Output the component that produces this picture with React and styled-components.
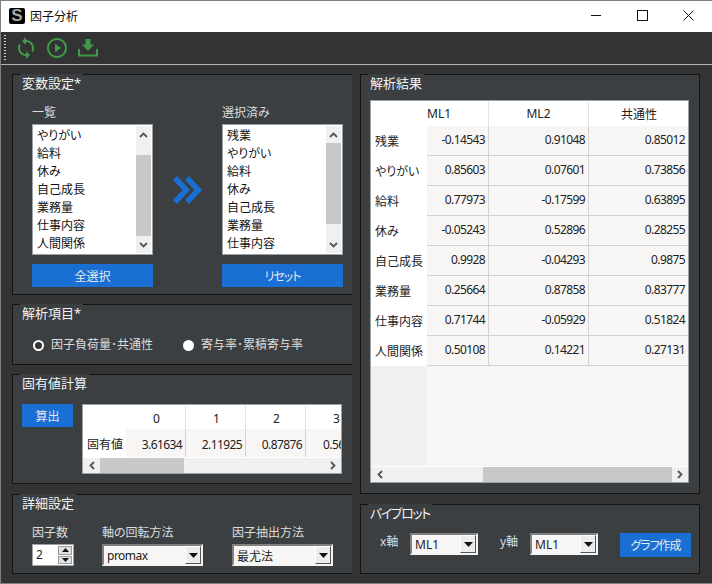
import React from 'react';
import styled, { createGlobalStyle } from 'styled-components';
import { MdSync, MdPlayCircleOutline } from 'react-icons/md';

const GlobalStyle = createGlobalStyle`
  html, body {
    margin: 0;
    padding: 0;
    overflow: hidden;
  }
  body {
    font-family: "Noto Sans", "Noto Sans CJK JP", sans-serif;
    font-size: 12px;
    font-feature-settings: "palt" 1;
  }
  * {
    box-sizing: border-box;
  }
`;

const Window = styled.div`
  width: 712px;
  height: 584px;
  display: flex;
  flex-direction: column;
  background-color: #333333;
  border-top: 1px solid #7f7f7f;
  border-left: 1px solid #7f7f7f;
  border-bottom: 1px solid #7f7f7f;
`;

const TitleBar = styled.div`
  height: 31px;
  flex-shrink: 0;
  display: flex;
  align-items: center;
  background-color: white;
  padding: 0 1px 2px 8px;
  color: #111;
  font-size: 12px;
`;

const Logo = styled.div`
  width: 16px;
  height: 16px;
  border-radius: 2px;
  background-color: #000;
  color: #a8a8a8;
  font-family: "Liberation Sans", sans-serif;
  font-weight: bold;
  font-size: 17px;
  line-height: 16px;
  text-align: center;
  margin-right: 5px;
`;

const TitleText = styled.div`
  flex: 1;
`;

const WindowButton = styled.div`
  width: 46px;
  height: 28px;
  display: flex;
  align-items: center;
  justify-content: center;
`;

const Toolbar = styled.div`
  height: 33px;
  flex-shrink: 0;
  display: flex;
  align-items: center;
  gap: 7px;
  padding-left: 3px;
  border-bottom: 1px solid #b4b4b4;
  background-color: #333333;
  color: #3f9a4c;
`;

const Grip = styled.div`
  width: 2px;
  height: 26px;
  margin-right: 1px;
  background-image: linear-gradient(#d0d0d0 50%, transparent 50%);
  background-size: 2px 3px;
`;

const ToolIcon = styled.div`
  width: 24px;
  height: 24px;
  display: flex;
  align-items: center;
  justify-content: center;
`;

const Content = styled.div`
  flex: 1;
  display: flex;
  gap: 8px;
  padding: 9px 0 0 11px;
`;

const Column = styled.div`
  width: ${(p) => p.$width}px;
  display: flex;
  flex-direction: column;
  gap: 9px;
`;

const Group = styled.section`
  height: ${(p) => p.$height}px;
  margin-top: ${(p) => p.$top || 0}px;
  flex-shrink: 0;
  background-color: #3b3f42;
  border: 1px solid #141414;
  border-right: ${(p) => (p.$open ? 'none' : '1px solid #141414')};
`;

const GroupTitle = styled.div`
  width: fit-content;
  height: 18px;
  margin: -1px 0 0 7px;
  padding: 0 2px 0 2px;
  background-color: #3b3f42;
  color: #f2f2f2;
  font-size: 13px;
  line-height: 18px;
  letter-spacing: ${(p) => p.$spacing || 0}px;
`;

const SelectRow = styled.div`
  display: flex;
  margin: 13px 0 0 19px;
`;

const ListColumn = styled.div`
  width: 121px;
  display: flex;
  flex-direction: column;
`;

const FieldLabel = styled.div`
  height: 16px;
  line-height: 16px;
  margin-bottom: 3px;
  color: #dcdcdc;
  font-size: 12px;
  white-space: nowrap;
`;

const ListFrame = styled.div`
  height: 131px;
  display: flex;
  border: 1px solid #9ca1a6;
  padding: 1px;
  background-color: white;
`;

const ListItems = styled.div`
  flex: 1;
  padding-left: 3px;
  overflow: hidden;
`;

const ListItem = styled.div`
  height: 18px;
  padding-top: 2px;
  line-height: 16px;
  color: #111;
  font-size: 12px;
`;

const VTrack = styled.div`
  position: relative;
  width: 15px;
  background-color: #f0f0f0;
`;

const VThumb = styled.div`
  position: absolute;
  left: 0;
  right: 0;
  top: ${(p) => p.$top}px;
  height: ${(p) => p.$length}px;
  background-color: #c8c8c8;
`;

const ArrowSlot = styled.div`
  position: absolute;
  left: 0;
  right: 0;
  height: 17px;
  ${(p) => (p.$end ? 'bottom: 0;' : 'top: 0;')}
  display: flex;
  align-items: center;
  justify-content: center;
`;

const ArrowColumn = styled.div`
  width: 69px;
  display: flex;
  align-items: flex-start;
  justify-content: center;
  padding-top: 71px;
`;

const BlueButton = styled.button`
  width: ${(p) => p.$width || 121}px;
  height: ${(p) => p.$height || 23}px;
  margin: ${(p) => p.$top || 0}px 0 0 ${(p) => p.$left || 0}px;
  flex-shrink: 0;
  border: none;
  padding: 0;
  background-color: #1a6fd4;
  color: #e8e8e8;
  font-family: inherit;
  font-size: 12px;
  font-feature-settings: inherit;
  letter-spacing: ${(p) => p.$spacing || 0}px;
`;

const RadioRow = styled.div`
  display: flex;
  gap: 30px;
  margin: 15px 0 0 20px;
`;

const RadioOption = styled.div`
  display: flex;
  align-items: center;
  gap: 7px;
  color: #dcdcdc;
  font-size: 12px;
  line-height: 16px;
`;

const RadioDot = styled.div`
  width: 11px;
  height: 11px;
  border-radius: 50%;
  background-color: ${(p) => (p.$checked ? '#333' : 'white')};
  border: ${(p) => (p.$checked ? '2px solid white' : 'none')};
`;

const EigenRow = styled.div`
  display: flex;
  align-items: flex-start;
  gap: 9px;
  margin: ${(p) => p.$top}px 0 0 9px;
`;

const TableFrame = styled.div`
  width: ${(p) => p.$width}px;
  height: ${(p) => p.$height}px;
  display: flex;
  flex-direction: column;
  border: 1px solid #9ca1a6;
  background-color: white;
  overflow: hidden;
`;

const TableGrid = styled.div`
  flex: 1;
  min-height: 0;
  display: grid;
  grid-template-columns: ${(p) => p.$columns};
  grid-template-rows: ${(p) => p.$rows};
  color: #222;
`;

const Corner = styled.div`
  background-color: white;
`;

const ColHead = styled.div`
  background-color: white;
  border-right: ${(p) => (p.$flush ? 'none' : '1px solid #e4e4e4')};
  display: flex;
  align-items: center;
  justify-content: ${(p) => (p.$left ? 'flex-start' : 'center')};
  padding: ${(p) => p.$pad || '0'};
  font-size: 12px;
  white-space: nowrap;
  overflow: hidden;
`;

const RowHead = styled.div`
  background-color: white;
  display: flex;
  align-items: center;
  padding: ${(p) => p.$pad || '0 0 0 4px'};
  font-size: 12px;
  white-space: nowrap;
`;

const Cell = styled.div`
  background-color: #f8f6f4;
  border-right: 1px solid #d2d2d2;
  border-bottom: ${(p) => (p.$noRule ? 'none' : '1px solid #d2d2d2')};
  display: flex;
  align-items: center;
  justify-content: ${(p) => (p.$clip ? 'flex-start' : 'flex-end')};
  padding: ${(p) => (p.$clip ? '2px 0 0 17px' : p.$noRule ? '2px 3px 0 0' : '0 3px 2px 0')};
  font-size: 12px;
  letter-spacing: -0.6px;
  white-space: nowrap;
  overflow: hidden;
`;

const RowFill = styled.div`
  background-color: #f0f0f0;
`;

const CellFill = styled.div`
  grid-column: 2 / -1;
  background-color: #f8f6f4;
`;

const HTrack = styled.div`
  position: relative;
  height: 16px;
  flex-shrink: 0;
  background-color: #f0f0f0;
  border-top: 1px solid white;
`;

const HThumb = styled.div`
  position: absolute;
  top: 0;
  bottom: 0;
  left: ${(p) => p.$left}px;
  width: ${(p) => p.$length}px;
  background-color: #c8c8c8;
`;

const HArrowSlot = styled.div`
  position: absolute;
  top: 0;
  bottom: 0;
  width: 17px;
  ${(p) => (p.$end ? 'right: 0;' : 'left: 0;')}
  display: flex;
  align-items: center;
  justify-content: center;
`;

const DetailRow = styled.div`
  display: grid;
  grid-template-columns: 42px 102px 101px;
  column-gap: 28px;
  margin: 13px 0 0 19px;
`;

const Spin = styled.div`
  width: 42px;
  height: 22px;
  display: flex;
  border: 1px solid #9ca1a6;
  background-color: white;
  color: #222;
  font-size: 12px;
  line-height: 20px;
  padding-left: 3px;
`;

const SpinValue = styled.div`
  flex: 1;
`;

const SpinButtons = styled.div`
  width: 15px;
  display: flex;
  flex-direction: column;
  gap: 1px;
  padding: 1px 1px 1px 0;
`;

const SpinButton = styled.div`
  flex: 1;
  background-color: #e1e1e1;
  border: 1px solid #9a9a9a;
  display: flex;
  align-items: center;
  justify-content: center;
`;

const Combo = styled.div`
  width: ${(p) => p.$width}px;
  height: 22px;
  display: flex;
  align-items: center;
  justify-content: space-between;
  background-color: #f8f6f4;
  border-style: solid;
  border-width: 2px;
  border-color: #808080 #f4f4f4 #f4f4f4 #808080;
  padding-left: 3px;
  color: #222;
  font-size: 12px;
`;

const ComboValue = styled.span`
  padding-top: 1px;
  letter-spacing: ${(p) => (p.$tight ? '-0.5px' : '0')};
`;

const ComboButton = styled.div`
  width: 16px;
  height: 18px;
  background-color: #ececec;
  border-right: 1px solid #555;
  border-bottom: 1px solid #555;
  border-top: 1px solid #fff;
  border-left: 1px solid #fff;
  display: flex;
  align-items: center;
  justify-content: center;
`;

const PlotRow = styled.div`
  display: flex;
  align-items: flex-start;
  margin: 11px 0 0 19px;
`;

const AxisLabel = styled.div`
  width: ${(p) => p.$width}px;
  margin-left: ${(p) => p.$left || 0}px;
  line-height: 18px;
  color: #dcdcdc;
  font-size: 12px;
  flex-shrink: 0;
`;

const ChevronV = ({ up }) => (
  <svg width="9" height="6" viewBox="0 0 9 6">
    <path d={up ? 'M1 5 L4.5 1.5 L8 5' : 'M1 1 L4.5 4.5 L8 1'} fill="none" stroke="#555" strokeWidth="1.8" />
  </svg>
);

const ChevronH = ({ right }) => (
  <svg width="6" height="9" viewBox="0 0 6 9">
    <path d={right ? 'M1 1 L4.5 4.5 L1 8' : 'M5 1 L1.5 4.5 L5 8'} fill="none" stroke="#555" strokeWidth="1.8" />
  </svg>
);

const Triangle = ({ up, width = 9, height = 5 }) => (
  <svg width={width} height={height} viewBox="0 0 9 5">
    <path d={up ? 'M0 5 L4.5 0 L9 5 Z' : 'M0 0 L9 0 L4.5 5 Z'} fill="#111" />
  </svg>
);

const DownloadIcon = () => (
  <svg width="20" height="18" viewBox="0 0 20 18">
    <path d="M1 10 V16.5 H19 V10" fill="none" stroke="currentColor" strokeWidth="2.2" />
    <path d="M7.5 0 H12.5 V5.5 H16 L10 12 L4 5.5 H7.5 Z" fill="currentColor" />
  </svg>
);

const DoubleArrow = () => (
  <svg width="29" height="28" viewBox="0 0 29 28">
    <path d="M0 4 L4 0 L17 14 L4 28 L0 24 L9.5 14 Z" fill="#1a6fd4" />
    <path d="M12 4 L16 0 L29 14 L16 28 L12 24 L21.5 14 Z" fill="#1a6fd4" />
  </svg>
);

const VScrollbar = ({ top, length }) => (
  <VTrack>
    <VThumb $top={top} $length={length} />
    <ArrowSlot><ChevronV up /></ArrowSlot>
    <ArrowSlot $end><ChevronV /></ArrowSlot>
  </VTrack>
);

const HScrollbar = ({ left, length }) => (
  <HTrack>
    <HThumb $left={left} $length={length} />
    <HArrowSlot><ChevronH /></HArrowSlot>
    <HArrowSlot $end><ChevronH right /></HArrowSlot>
  </HTrack>
);

const VariableList = ({ items, top }) => (
  <ListFrame>
    <ListItems>
      {items.map((item) => <ListItem key={item}>{item}</ListItem>)}
    </ListItems>
    <VScrollbar top={top} length={81} />
  </ListFrame>
);

const ComboBox = ({ value, width, tight }) => (
  <Combo $width={width}>
    <ComboValue $tight={tight}>{value}</ComboValue>
    <ComboButton><Triangle /></ComboButton>
  </Combo>
);

const available = ['やりがい', '給料', '休み', '自己成長', '業務量', '仕事内容', '人間関係'];
const selected = ['残業', 'やりがい', '給料', '休み', '自己成長', '業務量', '仕事内容'];

const results = [
  ['残業', '-0.14543', '0.91048', '0.85012'],
  ['やりがい', '0.85603', '0.07601', '0.73856'],
  ['給料', '0.77973', '-0.17599', '0.63895'],
  ['休み', '-0.05243', '0.52896', '0.28255'],
  ['自己成長', '0.9928', '-0.04293', '0.9875'],
  ['業務量', '0.25664', '0.87858', '0.83777'],
  ['仕事内容', '0.71744', '-0.05929', '0.51824'],
  ['人間関係', '0.50108', '0.14221', '0.27131'],
];

const App = () => (
  <Window>
    <GlobalStyle />
    <TitleBar>
      <Logo>S</Logo>
      <TitleText>因子分析</TitleText>
      <WindowButton>
        <svg width="11" height="11" viewBox="0 0 11 11"><path d="M0 5.5 H10" stroke="#111" strokeWidth="1" /></svg>
      </WindowButton>
      <WindowButton>
        <svg width="11" height="11" viewBox="0 0 11 11"><rect x="0.5" y="0.5" width="10" height="10" fill="none" stroke="#111" /></svg>
      </WindowButton>
      <WindowButton>
        <svg width="11" height="11" viewBox="0 0 11 11"><path d="M0.5 0.5 L10.5 10.5 M10.5 0.5 L0.5 10.5" stroke="#111" /></svg>
      </WindowButton>
    </TitleBar>
    <Toolbar>
      <Grip />
      <ToolIcon><MdSync size={24} /></ToolIcon>
      <ToolIcon><MdPlayCircleOutline size={24} /></ToolIcon>
      <ToolIcon><DownloadIcon /></ToolIcon>
    </Toolbar>
    <Content>
      <Column $width={340}>
        <Group $height={221} $open>
          <GroupTitle>変数設定*</GroupTitle>
          <SelectRow>
            <ListColumn>
              <FieldLabel>一覧</FieldLabel>
              <VariableList items={available} top={29} />
              <BlueButton $top={9}>全選択</BlueButton>
            </ListColumn>
            <ArrowColumn><DoubleArrow /></ArrowColumn>
            <ListColumn>
              <FieldLabel>選択済み</FieldLabel>
              <VariableList items={selected} top={17} />
              <BlueButton $top={9} $spacing={-1}>リセット</BlueButton>
            </ListColumn>
          </SelectRow>
        </Group>
        <Group $height={61} $open>
          <GroupTitle>解析項目*</GroupTitle>
          <RadioRow>
            <RadioOption><RadioDot $checked />因子負荷量･共通性</RadioOption>
            <RadioOption><RadioDot />寄与率･累積寄与率</RadioOption>
          </RadioRow>
        </Group>
        <Group $height={110} $open>
          <GroupTitle>固有値計算</GroupTitle>
          <EigenRow $top={12}>
            <BlueButton $width={51}>算出</BlueButton>
            <TableFrame $width={260} $height={70}>
              <TableGrid $columns="43px 60px 60px 60px 36px" $rows="24px 28px">
                <Corner />
                <ColHead $pad="2px 0 0 2px">0</ColHead>
                <ColHead $pad="2px 0 0 2px">1</ColHead>
                <ColHead $pad="2px 0 0 2px">2</ColHead>
                <ColHead $flush $left $pad="2px 0 0 27px">3</ColHead>
                <RowHead $pad="2px 0 0 4px">固有値</RowHead>
                <Cell $noRule>3.61634</Cell>
                <Cell $noRule>2.11925</Cell>
                <Cell $noRule>0.87876</Cell>
                <Cell $noRule $clip>0.56</Cell>
              </TableGrid>
              <HScrollbar left={17} length={84} />
            </TableFrame>
          </EigenRow>
        </Group>
        <Group $height={80} $top={1} $open>
          <GroupTitle>詳細設定</GroupTitle>
          <DetailRow>
            <div>
              <FieldLabel>因子数</FieldLabel>
              <Spin>
                <SpinValue>2</SpinValue>
                <SpinButtons>
                  <SpinButton><Triangle up width={7} height={4} /></SpinButton>
                  <SpinButton><Triangle width={7} height={4} /></SpinButton>
                </SpinButtons>
              </Spin>
            </div>
            <div>
              <FieldLabel>軸の回転方法</FieldLabel>
              <ComboBox value="promax" width={101} tight />
            </div>
            <div>
              <FieldLabel>因子抽出方法</FieldLabel>
              <ComboBox value="最尤法" width={101} />
            </div>
          </DetailRow>
        </Group>
      </Column>
      <Column $width={340}>
        <Group $height={420}>
          <GroupTitle>解析結果</GroupTitle>
          <EigenRow $top={8}>
            <TableFrame $width={319} $height={383}>
              <TableGrid $columns="56px 62px 100px 100px" $rows="25px repeat(8, 30px) 1fr">
                <Corner />
                <ColHead $left>ML1</ColHead>
                <ColHead>ML2</ColHead>
                <ColHead $flush>共通性</ColHead>
                {results.map(([name, a, b, c]) => (
                  <React.Fragment key={name}>
                    <RowHead>{name}</RowHead>
                    <Cell>{a}</Cell>
                    <Cell>{b}</Cell>
                    <Cell>{c}</Cell>
                  </React.Fragment>
                ))}
                <RowFill />
                <CellFill />
              </TableGrid>
              <HScrollbar left={112} length={189} />
            </TableFrame>
          </EigenRow>
        </Group>
        <Group $height={70} $top={1}>
          <GroupTitle $spacing={-1.5}>バイプロット</GroupTitle>
          <PlotRow>
            <AxisLabel $width={30}>x軸</AxisLabel>
            <ComboBox value="ML1" width={68} />
            <AxisLabel $width={30} $left={22}>y軸</AxisLabel>
            <ComboBox value="ML1" width={68} />
            <BlueButton $width={71} $height={24} $left={22} $spacing={-1}>グラフ作成</BlueButton>
          </PlotRow>
        </Group>
      </Column>
    </Content>
  </Window>
);

export default App;
